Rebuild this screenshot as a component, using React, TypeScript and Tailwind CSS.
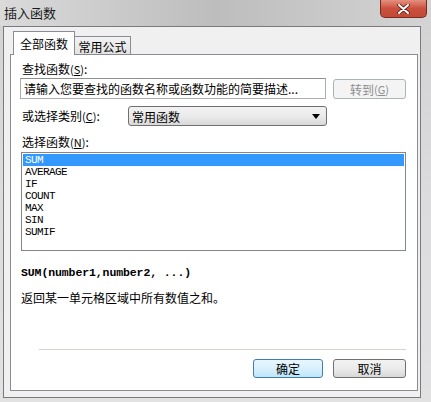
const cjk = { fontFamily: '"Noto Sans CJK SC", "Noto Sans", sans-serif' };
const mono = { fontFamily: '"Liberation Mono", "DejaVu Sans Mono", monospace' };

const functions = ["SUM", "AVERAGE", "IF", "COUNT", "MAX", "SIN", "SUMIF"];

function Key({ k }: { k: string }) {
  return (
    <span className="text-[11px]">
      (<u>{k}</u>)
    </span>
  );
}

export default function App() {
  return (
    <div
      className="relative w-[431px] h-[402px] overflow-hidden bg-gradient-to-b from-[#d2d2d2] via-[#dcdcdc] to-[#e2e2e2] text-[12px] leading-[15px] text-black"
      style={cjk}
    >
      {/* title bar */}
      <div className="h-[26px] flex items-start justify-between bg-gradient-to-r from-[#dadada] via-[#bdbdbd] to-[#d4d4d4]">
        <span className="pl-[4px] pt-[5px] text-[13px] leading-[15px] text-[#1a1a1a]">插入函数</span>
        <button className="mr-[4px] w-[47px] h-[18px] rounded-b-[5px] border border-t-0 border-[#7a2a22] bg-gradient-to-b from-[#e4907f] via-[#c9503d] to-[#c24a35] flex items-center justify-center">
          <svg width="13" height="10" viewBox="0 0 13 10">
            <path d="M2 1 L11 9 M11 1 L2 9" stroke="#5a1a12" strokeWidth="3.6" strokeLinecap="round" />
            <path d="M2 1 L11 9 M11 1 L2 9" stroke="#ffffff" strokeWidth="2" strokeLinecap="round" />
          </svg>
        </button>
      </div>

      {/* client area */}
      <div className="ml-[3px] mr-[10px] h-[372px] border border-[#7a7a7a] bg-[#f0f0f0] pl-[6px] pr-[2px] pt-[4px] flex flex-col">
        <div className="flex items-end h-[24px] pl-[3px]">
          <div className="relative z-10 w-[62px] h-[24px] bg-white border border-b-0 border-[#898c95] flex items-center justify-center text-[12px]">
            全部函数
          </div>
          <div className="w-[57px] h-[19px] -ml-px border border-b-0 border-[#898c95] bg-gradient-to-b from-[#f2f2f2] to-[#e3e3e3] flex items-center justify-center text-[12px]">
            常用公式
          </div>
        </div>

        {/* tab panel */}
        <div className="-mt-px h-[337px] bg-white border border-[#898c95] pl-[9px] pr-[11px] flex flex-col">
          <div className="mt-[6px] pl-[2px]">
            查找函数<Key k="S" />:
          </div>
          <div className="mt-[1px] flex items-start justify-between">
            <div className="w-[306px] h-[21px] border border-[#abadb3] border-t-[#8e8f8f] bg-white pl-[3px] flex items-center text-[12px] whitespace-nowrap overflow-hidden">
              请输入您要查找的函数名称或函数功能的简要描述...
            </div>
            <button className="mt-[1px] w-[73px] h-[20px] rounded-[3px] border border-[#adb2b5] bg-[#f4f4f4] text-[#8d8d8d] flex items-center justify-center">
              转到<Key k="G" />
            </button>
          </div>
          <div className="mt-[7px] flex items-center h-[20px]">
            <span className="w-[108px] pl-[2px]">
              或选择类别<Key k="C" />:
            </span>
            <div className="w-[199px] h-[20px] rounded-[3px] border border-[#707070] bg-gradient-to-b from-[#f2f2f2] via-[#ebebeb] to-[#d8d8d8] flex items-center justify-between pl-[3px] pr-[6px]">
              <span>常用函数</span>
              <svg width="8" height="5" viewBox="0 0 8 5">
                <path d="M0 0 H8 L4 5 Z" fill="#000" />
              </svg>
            </div>
          </div>
          <div className="mt-[8px] pl-[2px]">
            选择函数<Key k="N" />:
          </div>
          <div className="mt-[2px] ml-px h-[99px] border border-[#828790] bg-white p-px flex flex-col">
            {functions.map((f, i) => (
              <div
                key={f}
                className={
                  i === 0
                    ? "h-[12px] leading-[12px] pl-[2px] bg-[#3399ff] text-white text-[11px] tracking-[-0.6px]"
                    : "h-[12px] leading-[12px] pl-[2px] text-[11px] tracking-[-0.6px]"
                }
                style={mono}
              >
                {f}
              </div>
            ))}
          </div>
          <div className="mt-[14px] pl-px font-bold text-[11.5px] leading-[15px] tracking-[-0.1px]" style={mono}>
            SUM(number1,number2, ...)
          </div>
          <div className="mt-[10px] pl-px">返回某一单元格区域中所有数值之和。</div>
          <div className="mt-[44px] ml-[19px] h-px bg-[#d5d5cf]" />
          <div className="mt-[9px] flex justify-end gap-[10px]">
            <button className="w-[70px] h-[19px] rounded-[3px] border border-[#3c7fb1] bg-gradient-to-b from-[#eaf6fd] via-[#d9f0fc] to-[#bee6fd] flex items-center justify-center">
              确定
            </button>
            <button className="w-[73px] h-[19px] rounded-[3px] border border-[#707070] bg-gradient-to-b from-[#f2f2f2] via-[#ebebeb] to-[#d8d8d8] flex items-center justify-center">
              取消
            </button>
          </div>
        </div>
      </div>
    </div>
  );
}
